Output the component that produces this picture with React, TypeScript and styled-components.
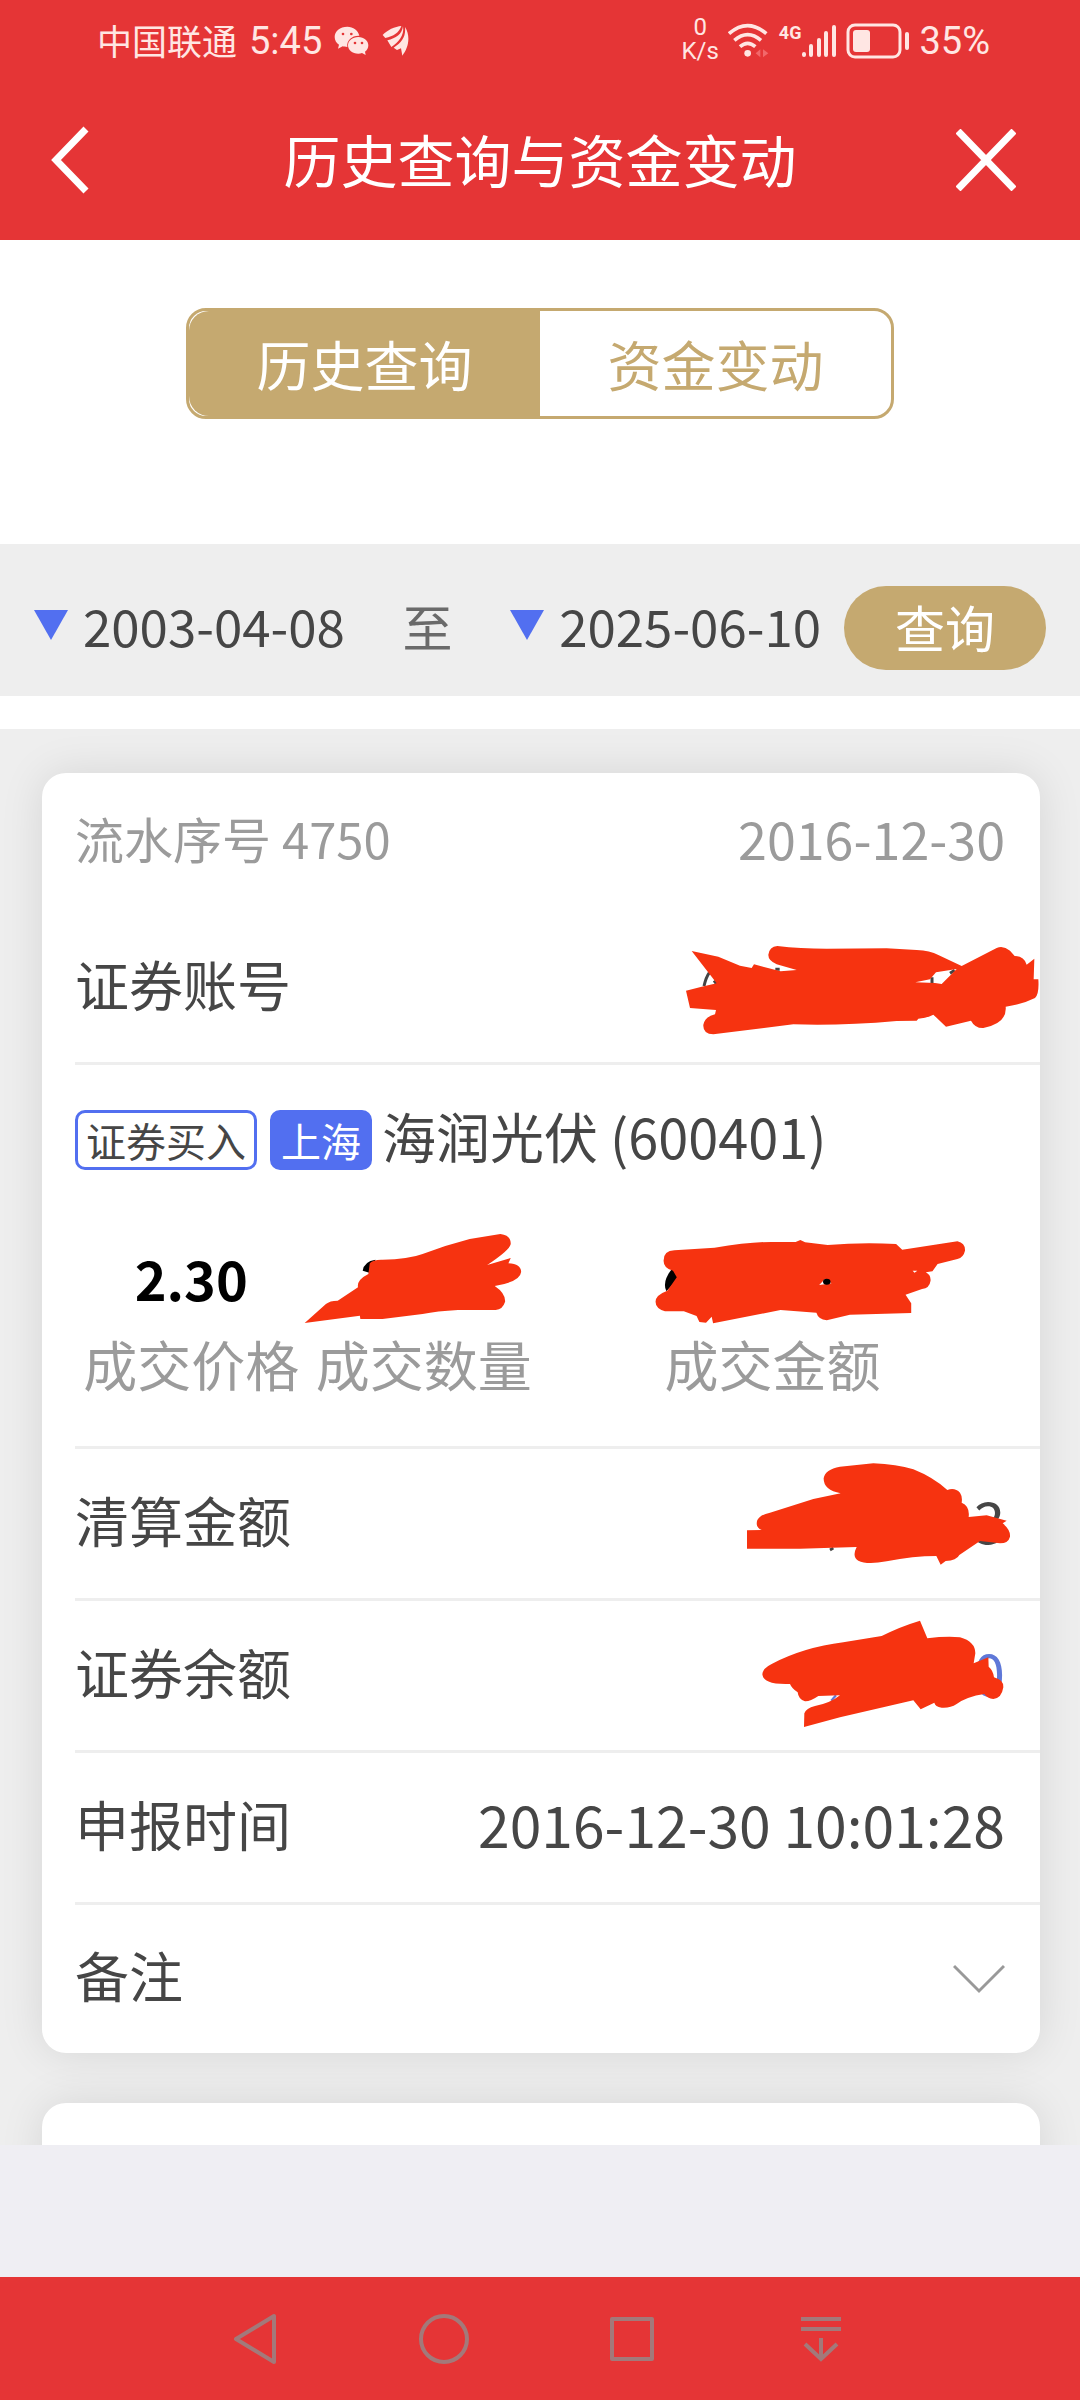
import React from "react";
import styled, { createGlobalStyle } from "styled-components";

const color = {
  red: "#e53536",
  gold: "#c5a970",
  blue: "#526ff0",
  ink: "#464646",
  mute: "#9b9b9b",
  line: "#eeeeee",
  marker: "#f63310",
  nav: "#a3797a",
};

const GlobalStyle = createGlobalStyle`
  * { box-sizing: border-box; }
  body { margin: 0; background: #fff; }
  body, button {
    font-family: "Noto Sans CJK SC", "Noto Sans", sans-serif;
  }
  button { border: 0; padding: 0; background: none; color: inherit; cursor: pointer; }
`;

const Screen = styled.div`
  display: flex;
  flex-direction: column;
  height: 100vh;
  overflow: hidden;
  color: ${color.ink};
`;

const Top = styled.header`
  flex: none;
  height: 240px;
  background: ${color.red};
  color: #fff;
`;

const StatusBar = styled.div`
  display: flex;
  justify-content: space-between;
  height: 82px;
  padding: 0 90px 0 97px;
  color: #ffe6e3;
  font-family: Roboto, "Noto Sans CJK SC", sans-serif;
  font-size: 38px;
`;

const StatusGroup = styled.div<{ $gap: number }>`
  display: flex;
  align-items: center;
  gap: ${(p) => p.$gap}px;
`;

const Carrier = styled.span`
  padding-bottom: 4px;
  font-size: 35px;
`;

const Speed = styled.span`
  display: flex;
  flex-direction: column;
  align-items: center;
  padding-bottom: 4px;
  font-size: 24px;
  line-height: 24px;
`;

const Signal = styled.span`
  display: flex;
  align-items: flex-start;
  font-size: 18px;
  font-weight: 700;
  line-height: 18px;
`;

const TitleBar = styled.div`
  display: flex;
  align-items: center;
  justify-content: space-between;
  height: 156px;
  padding: 0 64px 0 50px;
`;

const Title = styled.h1`
  margin: 0;
  padding: 0 0 4px 14px;
  font-size: 57px;
  font-weight: 400;
  line-height: 80px;
`;

const IconButton = styled.button`
  display: flex;
  width: 60px;
`;

const TabArea = styled.div`
  flex: none;
  display: flex;
  justify-content: center;
  height: 304px;
  padding: 68px 186px 0;
`;

const Tabs = styled.div`
  display: flex;
  flex: 1;
  height: 111px;
  border: 3px solid ${color.gold};
  border-radius: 20px;
`;

const Tab = styled.button<{ $active?: boolean }>`
  flex: 1;
  border-radius: 20px 0 0 20px;
  background: ${(p) => (p.$active ? color.gold : "transparent")};
  color: ${(p) => (p.$active ? "#fff" : color.gold)};
  font-size: 54px;
  line-height: 80px;
`;

const FilterBar = styled.div`
  flex: none;
  display: flex;
  align-items: center;
  gap: 23px;
  height: 152px;
  margin-bottom: 33px;
  padding: 16px 34px 0;
  background: ${color.line};
`;

const Range = styled.div`
  flex: 1;
  display: flex;
  align-items: center;
  justify-content: space-between;
  padding-bottom: 6px;
  color: #6a6a6a;
  font-size: 50px;
  line-height: 72px;
`;

const DateButton = styled.button`
  display: flex;
  align-items: center;
  gap: 15px;
  color: ${color.ink};
  font-size: 51px;
  line-height: 72px;
`;

const Triangle = styled.i`
  border: 17px solid transparent;
  border-top: 30px solid ${color.blue};
  border-bottom: 0;
`;

const QueryButton = styled.button`
  width: 202px;
  height: 84px;
  padding-bottom: 4px;
  border-radius: 42px;
  background: ${color.gold};
  color: #fff;
  font-size: 50px;
  line-height: 80px;
`;

const List = styled.main`
  flex: 1;
  min-height: 0;
  display: flex;
  flex-direction: column;
  gap: 50px;
  overflow: hidden;
  padding: 44px 40px 0 42px;
  background: ${color.line};
`;

const Card = styled.article`
  flex: none;
  min-height: 400px;
  border-radius: 24px;
  background: #fff;
  box-shadow: 0 0 44px rgba(0, 0, 0, 0.1);
  padding-left: 33px;
`;

const CardHead = styled.div`
  display: flex;
  justify-content: space-between;
  height: 140px;
  padding: 29px 35px 0 0;
  color: ${color.mute};
  font-size: 49px;
  line-height: 72px;
`;

const CardDate = styled.time`
  font-size: 52px;
`;

const Row = styled.div<{ $last?: boolean }>`
  position: relative;
  display: flex;
  align-items: center;
  justify-content: space-between;
  height: ${(p) => (p.$last ? 148 : 152)}px;
  padding-right: 35px;
  border-bottom: ${(p) => (p.$last ? 0 : 3)}px solid ${color.line};
  font-size: 54px;
  line-height: 80px;
`;

const Label = styled.span`
  padding-bottom: 8px;
`;

const Value = styled.span<{ $blue?: boolean }>`
  padding-bottom: 10px;
  color: ${(p) => (p.$blue ? "#5f78d8" : color.ink)};
  font-size: 57px;
`;

const RowMarks = styled.svg`
  position: absolute;
  top: 0;
  right: 0;
  height: 100%;
`;

const Trade = styled.section`
  border-bottom: 3px solid ${color.line};
`;

const Stock = styled.div`
  display: flex;
  align-items: center;
  height: 150px;
  font-size: 54px;
  line-height: 80px;
`;

const Tag = styled.span<{ $filled?: boolean }>`
  margin-right: ${(p) => (p.$filled ? 10 : 13)}px;
  padding: 0 8px;
  border: 3px solid ${color.blue};
  border-radius: 10px;
  background: ${(p) => (p.$filled ? color.blue : "#fff")};
  color: ${(p) => (p.$filled ? "#fff" : color.ink)};
  font-size: 40px;
  line-height: 54px;
`;

const Quotes = styled.div`
  display: grid;
  grid-template-columns: 1fr 1fr 2fr;
  padding: 20px 35px 39px 0;
  text-align: center;
  line-height: 86px;
`;

const Quote = styled.div`
  position: relative;
  display: flex;
  flex-direction: column;
  align-items: center;
`;

const QuoteValue = styled.strong`
  height: 86px;
  color: #000;
  font-size: 54px;
`;

const QuoteLabel = styled.span`
  color: ${color.mute};
  font-size: 54px;
  white-space: nowrap;
`;

const QuoteMarks = styled.svg`
  position: absolute;
  top: 3px;
  overflow: visible;
`;

const Blank = styled.div`
  flex: none;
  height: 132px;
  background: #efeef3;
`;

const NavBar = styled.nav`
  flex: none;
  display: flex;
  height: 123px;
  padding: 0 165px 0 161px;
  background: ${color.red};
`;

const NavButton = styled.button`
  flex: 1;
  display: flex;
  align-items: center;
  justify-content: center;
`;

const WeChat = () => (
  <svg width="36" height="30" viewBox="0 0 108 90" fill="currentColor">
    <path d="M40 2C18 2 2 16 2 33c0 10 5 18 13 23l-3 12 14-7c4 1 8 2 14 2-3-20 14-35 36-34C72 13 58 2 40 2z" />
    <path d="M73 33c-18 0-31 11-31 25s13 25 31 25c4 0 8-1 11-2l11 6-2-10c6-4 10-11 10-19 0-14-13-25-30-25z" />
    <g fill={color.red}>
      <circle cx="27" cy="24" r="4" />
      <circle cx="52" cy="24" r="4" />
      <circle cx="63" cy="51" r="4" />
      <circle cx="84" cy="51" r="4" />
    </g>
  </svg>
);

const Feather = () => (
  <svg width="28" height="32" viewBox="0 0 84 96" fill="currentColor">
    <path d="M58 3C40 4 14 16 2 30l8 9C34 34 52 22 58 3z" />
    <path d="M63 4C60 28 42 40 16 46l12 20C48 54 68 32 63 4z" />
    <path d="M69 6c3 28-9 46-34 62l10 7 12-5 4 22c18-22 26-58 8-86z" />
  </svg>
);

const Wifi = () => (
  <svg width="42" height="36" viewBox="0 0 126 108" fill="none" stroke="currentColor" strokeWidth="11">
    <path d="M3 32Q59-16 115 32" />
    <path d="M19 52q40-34 80 0" />
    <path d="M36 71q23-20 46 0" />
    <circle cx="59" cy="91" r="10" fill="currentColor" stroke="none" />
    <path d="M97 79v24L83 91zM105 79v24l16-12z" fill="#f2686a" stroke="none" />
  </svg>
);

const Bars = () => (
  <svg width="36" height="34" viewBox="0 0 36 34" stroke="currentColor" strokeWidth="4" strokeLinecap="round">
    <path d="M3 30v1M10 22v9M18 16v15M25 9v22M33 3v28" />
  </svg>
);

const Battery = () => (
  <svg width="64" height="36" viewBox="0 0 64 36" fill="none" stroke="currentColor">
    <rect x="2" y="2" width="52" height="32" rx="7" strokeWidth="3" />
    <rect x="7" y="7" width="17" height="22" rx="3" fill="currentColor" stroke="none" />
    <path d="M61 11v14" strokeWidth="4" strokeLinecap="round" />
  </svg>
);

const AccountMarks = () => (
  <RowMarks width="400" viewBox="0 -21 1200 447">
    <path d="M192 198Q198 172 208 158M222 182l8 10M406 148h13M876 172v20M930 160l14-9" fill="none" stroke="#444" strokeWidth="9" />
    <path
      fill={color.marker}
      fillRule="evenodd"
      d="M155 93L235 110L300 137L335 144L342 133L422 154L470 150L410 133Q384 122 385 104Q388 80 412 78Q480 86 560 86L740 85L830 90Q870 92 895 105L965 138L1070 84Q1090 76 1110 92L1124 108Q1152 108 1160 134L1183 116L1181 178L1195 178Q1198 222 1185 234Q1150 252 1097 260Q1102 310 1030 324Q1005 325 993 302L918 320L880 284Q862 294 835 296L830 302L770 303Q600 318 460 313L220 343Q188 342 190 314Q195 290 225 283L228 270L150 264L138 212L185 200L230 190ZM950 147L905 192L885 189L826 187L870 178L888 157Z"
    />
  </RowMarks>
);

const AmountMarks = () => (
  <RowMarks width="340" viewBox="0 27 1020 447">
    <path d="M390 330l10-6" stroke="#444" strokeWidth="8" />
    <path
      fill={color.marker}
      d="M141 271L185 270Q165 262 172 240Q180 224 210 218L340 177L422 160Q370 150 371 115Q375 88 420 80L520 70Q590 73 640 88Q700 112 742 150Q765 142 780 158Q788 170 785 188Q810 198 806 231L860 226L920 242L908 250Q932 270 930 290Q925 310 900 310L840 303L778 345Q770 362 737 363L722 374L709 348Q640 348 560 364Q500 375 475 362Q455 350 470 321L300 326L141 326Z"
    />
  </RowMarks>
);

const BalanceMarks = () => (
  <RowMarks width="340" viewBox="0 483 1020 447">
    <path d="M394 782l14-16" stroke="#5f78d8" strokeWidth="7" />
    <path
      fill={color.marker}
      d="M187 703Q188 685 215 672Q310 622 430 607L545 588Q600 560 660 542L682 595Q740 588 780 592Q826 605 826 640L821 670L865 652L866 680Q880 692 882 712Q912 720 910 742Q905 775 880 777Q862 775 853 762Q800 770 770 792Q750 805 725 803Q705 800 703 788L662 808L640 781L420 832L312 861L313 820Q318 805 345 798Q390 790 420 766L355 768Q330 785 315 784Q295 778 293 757Q275 745 270 732Q190 735 187 703Z"
    />
  </RowMarks>
);

const CountMarks = () => (
  <QuoteMarks width="232" height="86" viewBox="57 114 492 258" preserveAspectRatio="none">
    <path d="M173 212Q176 184 200 179L196 222Z" />
    <path
      fill={color.marker}
      d="M50 369L95 312Q103 302 120 302L163 262Q160 240 185 222L188 190Q195 178 215 179Q270 178 300 162Q350 135 400 117L465 102Q487 105 487 132Q485 150 437 195L487 174L482 190Q509 192 509 216Q507 245 453 258Q476 280 475 305Q470 328 455 330L375 330Q330 333 300 342L215 357L168 357L167 347Z"
    />
  </QuoteMarks>
);

const SumMarks = () => (
  <QuoteMarks width="400" height="86" viewBox="620 114 848 258" preserveAspectRatio="none">
    <path d="M830 206L846 232L818 274Q808 245 830 206Z" />
    <path
      fill={color.marker}
      d="M812 182Q812 152 835 151L920 143Q1000 124 1050 126L1092 126L1102 120L1112 127L1160 135Q1230 127 1305 132L1318 149L1435 124Q1452 130 1451 152Q1448 172 1435 177L1393 192L1382 214L1368 217Q1379 225 1378 242Q1376 264 1360 267L1325 284L1337 310L1337 339L1207 344L1158 361Q1140 358 1136 338L1060 330L917 370L914 350L902 368L888 366L882 348L855 334L815 334Q795 325 795 305Q795 285 820 272L840 232L832 212Q812 205 812 182Z"
    />
    <path d="M1142 255L1154 237L1168 250Z" fill="#fff" />
    <ellipse cx="1158" cy="245" rx="8" ry="9" />
    <path d="M1340 212h10l-6 6z" fill="#fff" />
  </QuoteMarks>
);

export default function App() {
  return (
    <Screen>
      <GlobalStyle />
      <Top>
        <StatusBar>
          <StatusGroup $gap={12}>
            <Carrier>中国联通</Carrier>
            <span>5:45</span>
            <WeChat />
            <Feather />
          </StatusGroup>
          <StatusGroup $gap={9}>
            <Speed>
              <span>0</span>
              <span>K/s</span>
            </Speed>
            <Wifi />
            <Signal>
              4G
              <Bars />
            </Signal>
            <Battery />
            <span>35%</span>
          </StatusGroup>
        </StatusBar>
        <TitleBar>
          <IconButton aria-label="返回">
            <svg width="40" height="68" viewBox="0 0 40 68" fill="none" stroke="currentColor" strokeWidth="7">
              <path d="M36 3L6 34l30 31" />
            </svg>
          </IconButton>
          <Title>历史查询与资金变动</Title>
          <IconButton aria-label="关闭">
            <svg width="60" height="62" viewBox="0 0 60 62" stroke="currentColor" strokeWidth="7">
              <path d="M2 2l56 58M58 2L2 60" />
            </svg>
          </IconButton>
        </TitleBar>
      </Top>

      <TabArea>
        <Tabs>
          <Tab $active>历史查询</Tab>
          <Tab>资金变动</Tab>
        </Tabs>
      </TabArea>

      <FilterBar>
        <Range>
          <DateButton>
            <Triangle />
            2003-04-08
          </DateButton>
          <span>至</span>
          <DateButton>
            <Triangle />
            2025-06-10
          </DateButton>
        </Range>
        <QueryButton>查询</QueryButton>
      </FilterBar>

      <List>
        <Card>
          <CardHead>
            <span>流水序号 4750</span>
            <CardDate>2016-12-30</CardDate>
          </CardHead>
          <Row>
            <Label>证券账号</Label>
            <AccountMarks />
          </Row>
          <Trade>
            <Stock>
              <Tag>证券买入</Tag>
              <Tag $filled>上海</Tag>
              <Label>海润光伏 (600401)</Label>
            </Stock>
            <Quotes>
              <Quote>
                <QuoteValue>2.30</QuoteValue>
                <QuoteLabel>成交价格</QuoteLabel>
              </Quote>
              <Quote>
                <QuoteValue />
                <QuoteLabel>成交数量</QuoteLabel>
                <CountMarks />
              </Quote>
              <Quote>
                <QuoteValue />
                <QuoteLabel>成交金额</QuoteLabel>
                <SumMarks />
              </Quote>
            </Quotes>
          </Trade>
          <Row>
            <Label>清算金额</Label>
            <Value>3</Value>
            <AmountMarks />
          </Row>
          <Row>
            <Label>证券余额</Label>
            <Value $blue>0</Value>
            <BalanceMarks />
          </Row>
          <Row>
            <Label>申报时间</Label>
            <Value>2016-12-30 10:01:28</Value>
          </Row>
          <Row $last>
            <Label>备注</Label>
            <svg width="52" height="30" viewBox="0 0 52 30" fill="none" stroke="#999" strokeWidth="3">
              <path d="M1 2l25 25L51 2" />
            </svg>
          </Row>
        </Card>
        <Card />
      </List>

      <Blank />

      <NavBar>
        <NavButton aria-label="后退">
          <svg width="44" height="52" viewBox="0 0 44 52" fill="none" stroke={color.nav} strokeWidth="4" strokeLinejoin="round">
            <path d="M41 3v46L3 26z" />
          </svg>
        </NavButton>
        <NavButton aria-label="主屏幕">
          <svg width="52" height="52" viewBox="0 0 52 52" fill="none" stroke={color.nav} strokeWidth="4">
            <circle cx="26" cy="26" r="23" />
          </svg>
        </NavButton>
        <NavButton aria-label="最近任务">
          <svg width="46" height="46" viewBox="0 0 46 46" fill="none" stroke={color.nav} strokeWidth="4" strokeLinejoin="round">
            <path d="M3 3h40v40H3z" />
          </svg>
        </NavButton>
        <NavButton aria-label="下拉通知">
          <svg width="42" height="46" viewBox="0 0 42 46" fill="none" stroke={color.nav} strokeWidth="4">
            <path d="M1 3h40M1 13h40M21 22v22M5 28l16 15 16-15" />
          </svg>
        </NavButton>
      </NavBar>
    </Screen>
  );
}
